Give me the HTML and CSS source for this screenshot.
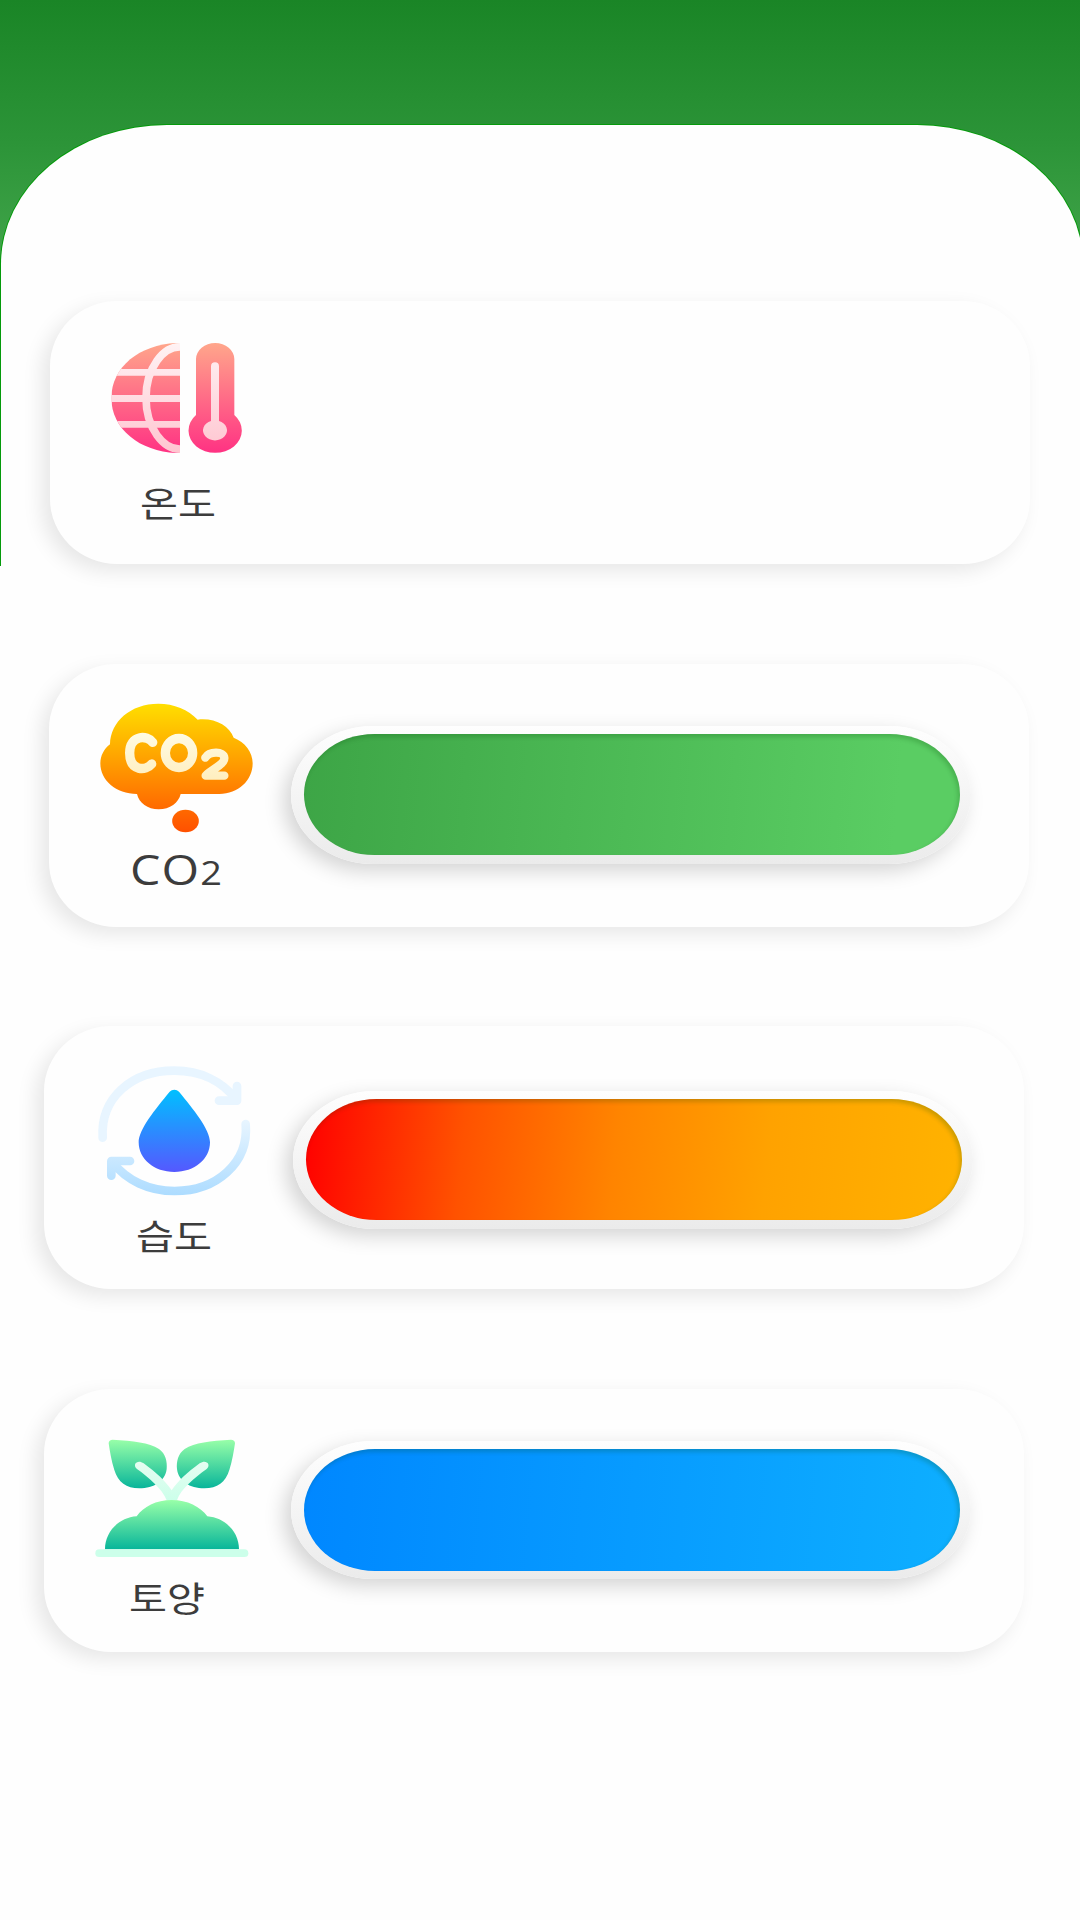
FILE: index.html
```
<!DOCTYPE html>
<html lang="ko">
<head>
<meta charset="utf-8">
<title>환경 모니터</title>
<link rel="stylesheet" href="styles.css">
</head>
<body>
<div class="screen">
<main class="panel">
  <section class="card card-temp">
    <div class="info">
      <svg class="icon" viewBox="0 0 570 450">
        <defs>
          <linearGradient id="pink" gradientUnits="userSpaceOnUse" x1="0" y1="69" x2="0" y2="399"><stop offset="0" stop-color="#ffa68b"/><stop offset="1" stop-color="#ff3283"/></linearGradient>
          <linearGradient id="pale" gradientUnits="userSpaceOnUse" x1="0" y1="69" x2="0" y2="399"><stop offset="0" stop-color="#fff3f4"/><stop offset="1" stop-color="#ffc5d0"/></linearGradient>
          <clipPath id="half"><path d="M270 69H258C150 74 64 140 64 234S150 394 258 399H270Z"/></clipPath>
        </defs>
        <g clip-path="url(#half)">
          <path fill="url(#pink)" d="M64 69H270V399H64Z"/>
          <path fill="url(#pale)" d="M64 147H270V167H64ZM64 225H270V246H64ZM64 303H270V323H64Z"/>
          <path fill="none" stroke="url(#pale)" stroke-width="23" d="M275 81C220 76 168 145 168 234S220 392 275 387"/>
        </g>
        <path fill="url(#pink)" d="M318 117A57.500 48 0 0 1 433 117V285A80 67 0 1 1 318 285Z"/>
        <path fill="url(#pale)" d="M363 139A12 12 0 0 1 387 139V303A36 30 0 1 1 363 303Z"/>
      </svg>
      <span class="label">온도</span>
    </div>
  </section>

  <section class="card card-co2">
    <div class="info">
      <svg class="icon" viewBox="0 0 570 480">
        <defs>
          <linearGradient id="sun" gradientUnits="userSpaceOnUse" x1="0" y1="70" x2="0" y2="457"><stop offset="0" stop-color="#ffdf00"/><stop offset="1" stop-color="#ff5000"/></linearGradient>
          <linearGradient id="cream" gradientUnits="userSpaceOnUse" x1="0" y1="160" x2="0" y2="300"><stop offset="0" stop-color="#fffbe2"/><stop offset="1" stop-color="#ffeebf"/></linearGradient>
        </defs>
        <path fill="url(#sun)" d="M90 193C91 125 152 71 235 71C282 71 325 89 353 119C403 113 448 137 461 173C495 186 518 216 518 250C518 302 474 342 418 342H302C296 368 270 388 236 388C203 388 177 369 171 342C108 341 61 302 61 250C61 227 72 207 90 193Z"/>
        <ellipse cx="316.500" cy="423" rx="40" ry="34" fill="url(#sun)"/>
        <g fill="none" stroke="url(#cream)" stroke-width="28" stroke-linecap="round" stroke-linejoin="round">
          <path d="M218 187C203 165 149 163 149 219S199 273 215 252"/>
          <ellipse cx="297" cy="219" rx="41" ry="43.500"/>
          <path stroke-width="25" d="M376 233C388 213 432 213 433 234C434 253 398 266 377 287H433"/>
        </g>
      </svg>
      <span class="label label-latin">CO<span class="sub">2</span></span>
    </div>
    <div class="track"><div class="fill fill-green"></div></div>
  </section>

  <section class="card card-humid">
    <div class="info">
      <svg class="icon" viewBox="0 0 570 450">
        <defs>
          <linearGradient id="drop" x1="0" y1="0" x2="0" y2="1"><stop offset="0" stop-color="#00c0ff"/><stop offset="1" stop-color="#5558ff"/></linearGradient>
          <linearGradient id="mist" gradientUnits="userSpaceOnUse" x1="0" y1="210" x2="0" y2="435"><stop offset="0" stop-color="#e8f5ff"/><stop offset="1" stop-color="#addcff"/></linearGradient>
        </defs>
        <path fill="url(#drop)" d="M269 125C276 117 290 117 297 125C340 178 390 238 390 277C390 327 344 366 283 366S176 327 176 277C176 238 226 178 269 125Z"/>
        <g fill="none" stroke-width="26" stroke-linecap="round" stroke-linejoin="round">
          <path stroke="#e8f5ff" d="M68 263C61 143 156 62 283 62C362 62 427 94 469 149"/>
          <path stroke="#e8f5ff" d="M417 152H471V108"/>
          <path stroke="url(#mist)" d="M497 222C507 340 408 423 284 423C207 423 139 391 99 338"/>
          <path stroke="url(#mist)" d="M150 333H94V377"/>
        </g>
      </svg>
      <span class="label">습도</span>
    </div>
    <div class="track"><div class="fill fill-orange"></div></div>
  </section>

  <section class="card card-soil">
    <div class="info">
      <svg class="icon" viewBox="0 0 570 450">
        <defs>
          <linearGradient id="leaf" gradientUnits="userSpaceOnUse" x1="0" y1="59" x2="0" y2="205"><stop offset="0" stop-color="#98ffa8"/><stop offset="1" stop-color="#08b59a"/></linearGradient>
          <linearGradient id="mound" gradientUnits="userSpaceOnUse" x1="0" y1="240" x2="0" y2="388"><stop offset="0" stop-color="#98ffa8"/><stop offset="1" stop-color="#08b59a"/></linearGradient>
          <linearGradient id="mint" gradientUnits="userSpaceOnUse" x1="0" y1="120" x2="0" y2="240"><stop offset="0" stop-color="#e7fdf2"/><stop offset="1" stop-color="#ccffea"/></linearGradient>
        </defs>
        <g fill="url(#leaf)">
          <path d="M98 59C160 63 207 67 237 87C257 101 262 125 260 147C256 183 222 205 178 205C139 205 114 187 103 150C94 121 90 96 86 70C86 63 91 59 98 59Z"/>
          <path d="M453 59C391 63 344 67 314 87C294 101 289 125 291 147C295 183 329 205 373 205C412 205 437 187 448 150C457 121 461 96 465 70C465 63 460 59 453 59Z"/>
        </g>
        <path fill="url(#mint)" d="M171 147C155 132 174 117 191 130C228 157 258 185 275 211C292 185 322 157 359 130C377 117 395 132 380 147C344 173 302 207 291 241H260C247 207 207 173 171 147Z"/>
        <path fill="url(#mound)" d="M75 388C75 336 115 293 170 289C190 260 229 240 275 240C322 240 361 260 382 289C437 294 477 336 477 388Z"/>
        <rect x="46" y="388" width="459" height="23" rx="12" fill="url(#mint)"/>
      </svg>
      <span class="label">토양</span>
    </div>
    <div class="track"><div class="fill fill-blue"></div></div>
  </section>
</main>
</div>
</body>
</html>
```
FILE: styles.css
```
* { box-sizing: border-box; }
body { margin: 0; background: #fff; }
.screen {
  width: 1080px;
  height: 1920px;
  padding: 125px 0 0 1px;
  overflow: hidden;
  background:
    linear-gradient(#1a8526, #2c9438 55%, #41a54a) 0 0 / 1080px 260px no-repeat,
    linear-gradient(#00a305, #00a305) 0 0 / 1px 566px no-repeat #fefefe;
}
.panel {
  width: 1082px;
  height: 1795px;
  padding: 176px 0 0 43px;
  border-radius: 166px 166px 0 0 / 139px 139px 0 0;
  background: #fefefe;
  box-shadow: 0 0 0 1px #059a0b;
  clip-path: polygon(-1px -1px, 100% -1px, 100% 100%, 0 100%, 0 441px, -1px 441px);
  display: flex;
  flex-direction: column;
  gap: 99.6px;
}
.card {
  flex: none;
  width: 980px;
  height: 263px;
  display: flex;
  align-items: flex-start;
  border-radius: 67px / 65px;
  background: #fefefe;
  box-shadow: -8px 7px 20px rgba(0, 0, 0, .095);
}
.card-temp { margin-left: 6px; padding: 19px 0 0 40px; }
.card-co2 { margin-left: 4.500px; padding: 16.400px 0 0 31.500px; }
.card-humid { padding: 23.800px 0 0 36px; }
.card-soil { padding: 31.200px 0 0 36px; }
.info { width: 190px; position: relative; height: 220px; }
.icon { display: block; width: 190px; }
.label {
  position: absolute;
  left: 50px;
  top: 160px;
  transform: scaleX(1.18);
  transform-origin: 0 0;
  white-space: nowrap;
  color: #3c3c3c;
  font: 35px/44px "Noto Sans CJK KR", sans-serif;
}
.card-humid .label { left: 56px; top: 163px; }
.card-soil .label { left: 49px; top: 155px; }
.label-latin { left: 49.500px; top: 167px; font: 42px/44px "Open Sans", sans-serif; letter-spacing: 1px; transform: scaleX(1.15); }
.sub { font-size: 33px; }
.track {
  width: 680px;
  height: 138px;
  margin: 45.600px 0 0 21px;
  padding: 8px 11px 8.500px 13px;
  border-radius: 82px / 69px;
  background: linear-gradient(#fefefe, #ebebeb);
  box-shadow: -7px 7px 20px rgba(0, 0, 0, .17);
}
.card-humid .track { margin: 40.600px 0 0 23px; }
.card-soil .track { margin: 21.400px 0 0 21px; }
.fill { height: 121.500px; border-radius: 71px / 61px; box-shadow: inset -2px 3px 4px rgba(0, 70, 0, .2); }
.fill-green { background: linear-gradient(95deg, #3da546, #5acd63 90%); }
.fill-orange { background: linear-gradient(95deg, #f00, #ff5200 24%, #ff8400 47%, #ffa200 70%, #ffb300); }
.fill-blue { background: linear-gradient(95deg, #0087ff, #0eafff); }
```
